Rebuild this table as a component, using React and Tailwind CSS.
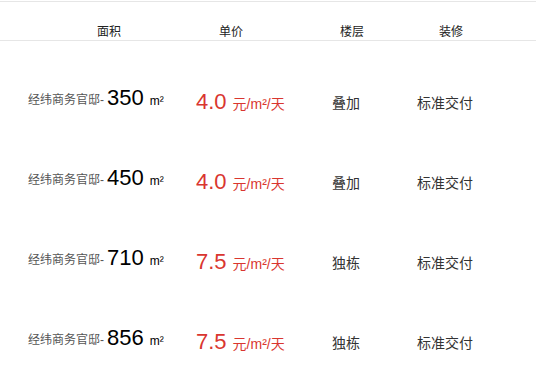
import React from "react";

const rows = [
  { area: "350", price: "4.0", floor: "叠加", deco: "标准交付" },
  { area: "450", price: "4.0", floor: "叠加", deco: "标准交付" },
  { area: "710", price: "7.5", floor: "独栋", deco: "标准交付" },
  { area: "856", price: "7.5", floor: "独栋", deco: "标准交付" },
];

export default function App() {
  return (
    <div
      className="w-[536px] h-[376px] overflow-hidden bg-white"
      style={{ fontFamily: '"Liberation Sans", "Noto Sans CJK SC", sans-serif' }}
    >
      <div className="mt-px border-t border-b border-[#e6e6e6] h-[40px] pt-[22px] pl-[97px] flex text-[12px] leading-[16px] text-[#222]">
        <div className="w-[122px]">面积</div>
        <div className="w-[121px]">单价</div>
        <div className="w-[99px]">楼层</div>
        <div>装修</div>
      </div>
      <div className="pt-[19px]">
        {rows.map((r, i) => (
          <div key={i} className="h-[80px] flex items-start pl-[28px]">
            <div className="w-[168px] pt-[24px] flex items-baseline">
              <span className="text-[12px] leading-[16px] text-[#555] relative -top-px">经纬商务官邸-</span>
              <span className="ml-[3px] text-[22px] leading-[28px] text-black">{r.area}</span>
              <span className="ml-[6px] text-[12px] leading-[16px] text-black">m²</span>
            </div>
            <div className="w-[136px] pt-[28px] flex items-baseline text-[#d9362f]">
              <span className="text-[22px] leading-[28px]">{r.price}</span>
              <span className="ml-[6px] text-[14px] leading-[18px]">元/m²/天</span>
            </div>
            <div className="w-[85px] pt-[34px] text-[14px] leading-[18px] text-[#333]">{r.floor}</div>
            <div className="pt-[34px] text-[14px] leading-[18px] text-[#333]">{r.deco}</div>
          </div>
        ))}
      </div>
    </div>
  );
}
